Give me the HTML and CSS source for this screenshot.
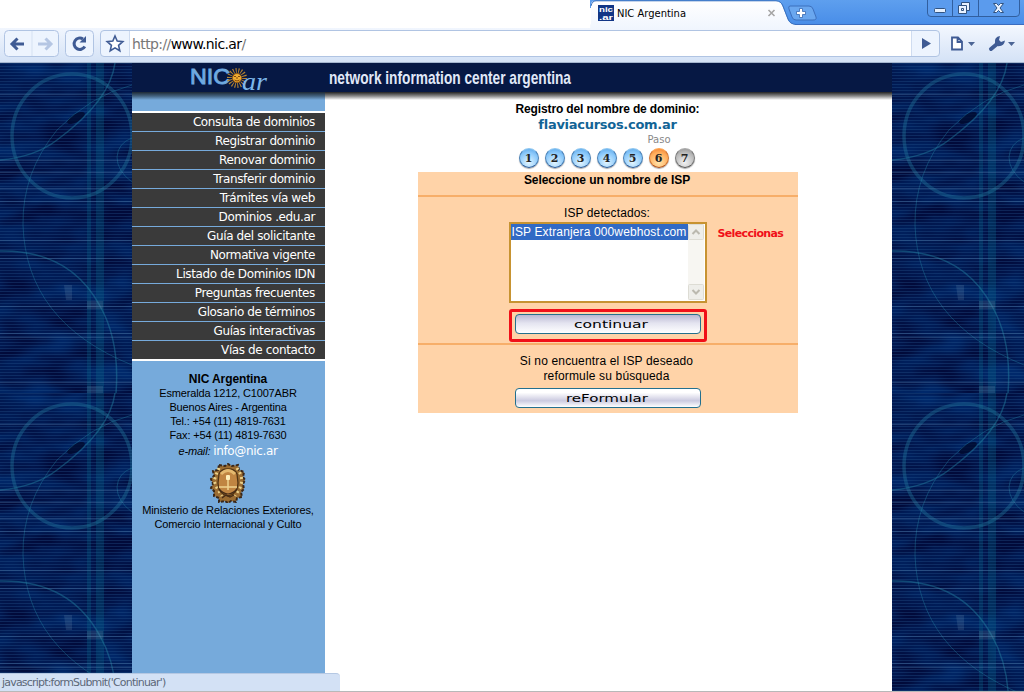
FILE: index.html
```html
<!DOCTYPE html>
<html lang="es">
<head>
<meta charset="utf-8">
<title>NIC Argentina</title>
<link rel="stylesheet" href="styles.css">
</head>
<body>
<header class="tabstrip">
  <div class="tab-space"></div>
  <svg class="tabs-art" width="434" height="28" viewBox="0 0 434 28">
    <defs>
      <linearGradient id="blue" x2="0" y2="1"><stop offset="0" stop-color="#5e9fee"/><stop offset="1" stop-color="#488de8"/></linearGradient>
      <linearGradient id="tab" x2="0" y2="1"><stop offset="0" stop-color="#ffffff"/><stop offset="1" stop-color="#f1f6fe"/></linearGradient>
    </defs>
    <path d="M0 0H434V25H205L0 8Z" fill="url(#blue)"/>
    <path d="M0 24.5H434V28H0Z" fill="#f4f8fe"/>
    <path d="M205 24.5H434" stroke="#3a6cc0"/>
    <path d="M1 28V5Q1 1 5 1H186Q190 1 192 5L198 20Q200 24 205 25V28Z" fill="url(#tab)"/>
    <path d="M1 6Q2 1 6 .8H186Q191 1 193 6L198 19Q200 24 206 24.5" fill="none" stroke="#3b71bd"/>
    <rect x="8" y="5" width="16" height="16" fill="#123686"/>
    <text x="9" y="12" class="fav" textLength="14" lengthAdjust="spacingAndGlyphs">nic</text>
    <text x="9" y="20" class="fav" textLength="14" lengthAdjust="spacingAndGlyphs">.ar</text>
    <text x="27" y="17" class="tab-title" textLength="69" lengthAdjust="spacingAndGlyphs">NIC Argentina</text>
    <path d="M178.500 10l6 6m0-6l-6 6" stroke="#a5a5a5" stroke-width="1.600"/>
    <path d="M200 6H219Q222 6 223 9L226 17Q227 20 223 20H206Q203 20 202 17L199 9Q198 6 200 6Z" fill="#6aa7ef" stroke="#3d70bd"/>
    <path d="M209.500 8.500h3v3h3v3h-3v3h-3v-3h-3v-3h3z" fill="#fff" stroke="#3668b0" stroke-width=".8"/>
    <path d="M337.500 0V13Q337.500 16.500 341 16.500H426Q429.500 16.500 429.500 13V0M362.500 0V16M388.500 0V16" fill="#5b9bed" stroke="#315f9f"/>
    <rect x="344.500" y="8.500" width="11" height="4" rx="1" fill="#e5f0ff" stroke="#315381"/>
    <g fill="#e9f2ff" stroke="#315381"><path d="M371.500 2.500h8v8h-8z"/><path d="M368.500 5.500h8v8h-8z"/><path d="M371.500 8.500h2v2h-2z"/></g>
    <path d="M403.500 3.500h3l2 2 2-2h3l-3.500 4.500 3.500 4.500h-3l-2-2-2 2h-3l3.500-4.500z" fill="#e9f2ff" stroke="#315381"/>
  </svg>
</header>
<div class="toolbar">
  <svg class="nav-buttons" width="55" height="27" viewBox="0 0 55 27">
    <rect x=".5" y=".5" width="54" height="26" rx="4" class="button-box"/><path d="M28 1V26" stroke="#d5e1f2"/>
    <path d="M20 14H9M13.500 8.500L8 14l5.500 5.500" class="arrow"/><path d="M34 14h12M41.500 8.500l5.500 5.500-5.500 5.500" class="arrow faded"/>
  </svg>
  <svg class="reload" width="29" height="27" viewBox="0 0 29 27">
    <rect x=".5" y=".5" width="28" height="26" rx="4" class="button-box"/>
    <path d="M19.800 16.500A5.700 5.700 0 1 1 18 9" class="arrow"/><path d="M14.500 12.500H21V6z" fill="#3f5b94"/>
  </svg>
  <div class="omnibox">
    <svg width="28" height="25" viewBox="0 0 28 25"><path d="M14 5l2.200 5.100 5.600.500-4.200 3.700 1.200 5.500-4.800-2.900-4.800 2.900 1.200-5.500-4.200-3.700 5.600-.500z" fill="#fff" stroke="#3f5b94" stroke-width="1.600"/></svg>
    <div class="url"><span class="muted">http://</span>www.nic.ar<span class="muted">/</span></div>
    <svg width="27" height="25" viewBox="0 0 27 25"><path d="M10 7v11l9-5.500z" fill="#3f5b94"/></svg>
  </div>
  <svg class="tools" width="74" height="27" viewBox="0 0 74 27">
    <path d="M3 7.500h6l4 4v8H3zM8.500 8v4H13" fill="#fff" stroke="#3f5b94" stroke-width="1.800"/>
    <path d="M19 12h7l-3.500 4zM59 12h7l-3.500 4z" fill="#4c6595"/>
    <path d="M42 19l6-5" stroke="#3f5b94" stroke-width="4" stroke-linecap="round"/>
    <path d="M46 13Q45 7 51 6L50 10l2 2 4-1.500Q55 17 48 16z" fill="#3f5b94"/>
  </svg>
</div>
<div class="viewport">
  <svg class="backdrop" width="132" height="628">
    <defs>
      <filter id="cloud" x="0" y="0" width="100%" height="100%" color-interpolation-filters="sRGB"><feTurbulence type="fractalNoise" baseFrequency=".022 .05" numOctaves="2" seed="8"/><feColorMatrix values="0 0 0 0 0  0 0 0 0 .16  0 0 0 0 .42  1.800 0 0 0 -.45"/></filter>
      <pattern id="scan" width="3" height="3" patternUnits="userSpaceOnUse"><path d="M0 .5H3" stroke="#25538c" stroke-opacity=".36"/></pattern>
      <symbol id="tile" viewBox="0 0 132 330">
        <rect width="132" height="330" fill="#010a3a"/>
        <rect width="132" height="330" filter="url(#cloud)"/>
        <rect width="132" height="330" fill="url(#scan)"/>
        <path d="M87 0h4v330h-4zM96 0h8v330h-8z" fill="#087091" opacity=".28"/>
        <ellipse cx="76" cy="55" rx="10" ry="4" fill="#000625" opacity=".7" transform="rotate(-30 76 55)"/>
        <g fill="none" stroke="#2482a2">
          <ellipse cx="72" cy="73" rx="60" ry="62" stroke-width="3.500" opacity=".35"/>
          <path d="M115 0Q110 38 57 77Q35 94 0 97M0 188Q70 187 100 243Q120 278 116 330" stroke-width="1.500" opacity=".45"/>
          <path d="M132 22Q90 33 57 67Q22 110 23 162Q26 259 132 302M132 75Q118 80 117 94Q117 108 132 119" opacity=".4"/>
        </g>
        <path d="M0 31.500H132M0 97.500H132M0 109.500H132M0 125.500H132M0 138.500H132M0 177.500H132M0 195.500H132M0 243.500H132M0 270.500H132M0 274.500H132M0 319.500H132" stroke="#608cba" opacity=".32"/>
        <path d="M64 222h8v15h-6zM87 238h16v8h-16zM87 323h16v7h-16z" fill="#7290b0" opacity=".2"/>
      </symbol>
    </defs>
    <use href="#tile" width="132" height="330"/><use href="#tile" y="330" width="132" height="330"/>
  </svg>
  <main class="page">
    <div class="banner">
      <svg width="760" height="29" viewBox="0 0 760 29">
        <text x="58" y="21" class="logo-nic" textLength="40" lengthAdjust="spacingAndGlyphs">NIC</text>
        <circle cx="105" cy="15" r="7.500" fill="none" stroke="#b78531" stroke-width="5" stroke-dasharray="1 1.600"/>
        <circle cx="105" cy="15" r="4.500" fill="#efad32" stroke="#9e5e10"/>
        <path d="M102 13.500h2m2 0h2M102.500 17q2.500 2 5 0M105 14v2" stroke="#81470d" fill="none"/>
        <text x="110" y="27" class="logo-ar" textLength="25" lengthAdjust="spacingAndGlyphs">ar</text>
        <text x="197" y="21" class="banner-title" textLength="242" lengthAdjust="spacingAndGlyphs">network information center argentina</text>
      </svg>
    </div>
    <div class="columns">
      <aside class="sidebar">
        <nav class="menu">
          <a>Consulta de dominios</a><a>Registrar dominio</a><a>Renovar dominio</a><a>Transferir dominio</a><a>Trámites vía web</a><a>Dominios .edu.ar</a><a>Guía del solicitante</a><a>Normativa vigente</a><a>Listado de Dominios IDN</a><a>Preguntas frecuentes</a><a>Glosario de términos</a><a>Guías interactivas</a><a>Vías de contacto</a>
        </nav>
        <address class="contact">
          <strong>NIC Argentina</strong>
          <span>Esmeralda 1212, C1007ABR</span><span>Buenos Aires - Argentina</span><span>Tel.: +54 (11) 4819-7631</span><span>Fax: +54 (11) 4819-7630</span>
          <span class="mail"><em>e-mail:</em> <a>info@nic.ar</a></span>
          <svg class="crest" width="38" height="40" viewBox="0 0 38 40">
            <path d="M10 2l6 1 3-2 4 2 6-1 1 5 5 2-1 5 2 3-2 4 1 5-3 3 1 5-5 1-1 4-5-1-3 2-3-2-6 1 0-4-5-2 0-5-3-3 2-4-2-5 3-3-1-5 5-1z" fill="#9a6c32" stroke="#392719" stroke-width="2" stroke-dasharray="3 1.500"/>
            <path d="M10 5l-3 7-2 6 3 7 5 8M28 5l4 7 1 6-2 7-5 8" fill="none" stroke="#ead18a" stroke-width="3" stroke-dasharray="2 3"/>
            <path d="M10 11Q12 6 19 6t9 5l1 9q0 11-10 13Q9 31 9 20z" fill="#c08542" stroke="#513414" stroke-width="1.300"/>
            <path d="M12 11q7-7 14 0" fill="none" stroke="#e4b96f" stroke-width="3"/>
            <path d="M10 24h18M19 15v12" stroke="#f0d390" stroke-width="1.500"/><rect x="17" y="12" width="4" height="5" rx="1" fill="#fff0bb"/>
            <path d="M10 26q9 10 18 0M13 35l4-3 4 2 4-2" fill="none" stroke="#452b16" stroke-width="1.200"/>
          </svg>
          <span class="ministry">Ministerio de Relaciones Exteriores,</span><span class="ministry">Comercio Internacional y Culto</span>
        </address>
      </aside>
      <section class="content">
        <h1>Registro del nombre de dominio:</h1>
        <div class="domain">flaviacursos.com.ar</div>
        <div class="step-label">Paso</div>
        <ol class="steps"><li>1</li><li>2</li><li>3</li><li>4</li><li>5</li><li class="current">6</li><li class="pending">7</li></ol>
        <div class="form">
          <h2>Seleccione un nombre de ISP</h2>
          <div class="detected">
            <div class="label">ISP detectados:</div>
            <div class="list-row">
              <div class="listbox"><div class="options"><div class="selected">ISP Extranjera 000webhost.com</div></div>
                <div class="scrollbar">
                  <svg width="16" height="16" viewBox="0 0 16 16"><rect x=".5" y=".5" width="15" height="15" rx="1" fill="#eeeeea" stroke="#dddcd4"/><path d="M4.500 10L8 6.500l3.500 3.500" class="chevron"/></svg>
                  <svg width="16" height="16" viewBox="0 0 16 16"><rect x=".5" y=".5" width="15" height="15" rx="1" fill="#eeeeea" stroke="#dddcd4"/><path d="M4.500 6L8 9.500 11.500 6" class="chevron"/></svg>
                </div>
              </div>
              <span class="note">Seleccionas</span>
            </div>
            <div class="highlight"><button><svg width="183" height="17"><text x="58" y="12" textLength="74" lengthAdjust="spacingAndGlyphs">continuar</text></svg></button></div>
          </div>
          <div class="retry"><p>Si no encuentra el ISP deseado<br>reformule su búsqueda</p><button><svg width="183" height="17"><text x="50" y="12" textLength="82" lengthAdjust="spacingAndGlyphs">reFormular</text></svg></button></div>
        </div>
      </section>
    </div>
  </main>
  <svg class="backdrop" width="132" height="628"><use href="#tile" width="132" height="330"/><use href="#tile" y="330" width="132" height="330"/></svg>
  <div class="status">javascript:formSubmit('Continuar')</div>
</div>
</body>
</html>
```
FILE: styles.css
```css
* { box-sizing: border-box; }
body { margin: 0; height: 692px; overflow: hidden; background: #fff; color: #000; font-family: "Liberation Sans", Arial, sans-serif; display: flex; flex-direction: column; }
svg { display: block; flex: none; }
.tabstrip { height: 28px; display: flex; flex: none; }
.tab-space { width: 590px; }
.tab-title { font: 11px "DejaVu Sans", sans-serif; }
.fav { font: bold 8px "Liberation Sans", sans-serif; fill: #fff; }
.toolbar { height: 35px; flex: none; display: flex; align-items: flex-start; padding: 2px 0 0 4px; background: linear-gradient(#f1f6fe, #d4e2f6); border-bottom: 1px solid #a5b6cf; }
.button-box { fill: #edf4fe; stroke: #b0c4e3; }
.arrow { fill: none; stroke: #3f5b94; stroke-width: 3; }
.faded { stroke: #b5c6e3; }
.reload { margin-left: 6px; }
.omnibox { width: 840px; height: 27px; margin-left: 6px; border: 1px solid #b0c4e3; border-radius: 4px; background: #edf4fe; display: flex; }
.url { flex: 1; background: #fff; border: solid #cfdcf0; border-width: 0 1px; padding: 1px 0 0 2px; font: 14px/25px "DejaVu Sans", sans-serif; letter-spacing: -.6px; }
.muted { color: #777; }
.tools { margin-left: 9px; }
.viewport { position: relative; height: 629px; flex: none; display: flex; border-bottom: 1px solid #b8b8b8; }
.backdrop { overflow: hidden; }
.page { width: 760px; display: flex; flex-direction: column; }
.banner { height: 29px; background: #061844; flex: none; }
.banner svg { overflow: visible; }
.logo-nic { font: 22px "Liberation Sans", sans-serif; fill: #6faae0; stroke: #6faae0; stroke-width: .9; }
.logo-ar { font: italic 25px "Liberation Serif", serif; fill: #7db7ea; }
.banner-title { font: bold 19px "Liberation Sans Narrow", "Liberation Sans", sans-serif; fill: #e0e8f8; }
.columns { flex: 1; display: flex; background: linear-gradient(#222, #888 4px, #fff 8px); }
.sidebar { width: 193px; background: linear-gradient(#1d2935, #42617e 4px, #76aadb 8px); padding-top: 19px; }
.menu { display: flex; flex-direction: column; gap: 1px; background: #76aadb; border: solid #fff; border-width: 2px 0; }
.menu a { height: 18px; background: #3a3a3a; color: #fff; text-align: right; padding-right: 10px; font: 12px/18px "DejaVu Sans", sans-serif; letter-spacing: -.38px; white-space: nowrap; }
.contact { display: flex; flex-direction: column; align-items: center; padding: 11px 1px 0 0; font: normal 11px/14px "Liberation Sans", sans-serif; letter-spacing: -.16px; white-space: nowrap; }
.contact strong { font-size: 12px; letter-spacing: -.1px; }
.mail { line-height: 18px; }
.mail a { color: #fff; font: 12px "DejaVu Sans", sans-serif; letter-spacing: -.35px; }
.crest { margin: 3px 0 0; }
.ministry { letter-spacing: -.11px; }
.content { flex: 1; display: flex; flex-direction: column; align-items: center; padding: 10px 2px 0 0; text-align: center; }
h1, h2, p { margin: 0; font-size: 12px; line-height: 15px; }
h1 { letter-spacing: -.13px; }
.domain { font: bold 13px/16px "DejaVu Sans", sans-serif; color: #126496; letter-spacing: -.28px; }
.step-label { font: 10px/13px "DejaVu Sans", sans-serif; color: #888; padding-left: 103px; }
.steps { margin: 2px 2px 4px 0; padding: 0; display: flex; gap: 6px; list-style: none; }
.steps li { width: 20px; height: 20px; border-radius: 50%; border: 1px solid #3979b9; border-color: #8dc6f0 #487fb4 #285a99; background: radial-gradient(circle at 48% 75%, #e2f5ff, #8ac8fa 60%, #4e9ee4); box-shadow: 0 1px 1px #aaa; font: bold 11px/19px "DejaVu Serif", serif; color: #222; }
.steps .current { border-color: #ffa552 #cd7332 #ae4e17; background: radial-gradient(circle at 48% 75%, #ffe5ad, #ffad5b 60%, #ed7425); }
.steps .pending { border-color: #aaa #777 #555; background: radial-gradient(circle at 48% 75%, #f2f2f2, #bbb 60%, #878787); }
.form { width: 380px; height: 241px; background: #ffd3a8; display: flex; flex-direction: column; }
h2 { height: 25px; line-height: 16px; border-bottom: 2px solid #f7ae69; padding-right: 1px; letter-spacing: -.07px; }
.detected { height: 148px; border-bottom: 2px solid #f7ae69; padding-top: 8px; }
.label { height: 17px; font-size: 12px; line-height: 16px; padding-right: 1px; letter-spacing: .1px; }
.list-row { display: flex; height: 81px; padding-left: 91px; }
.listbox { width: 198px; height: 81px; border: 2px solid #c79332; background: #fff; display: flex; padding: 0 1px 1px 0; }
.options { width: 179px; }
.selected { height: 16px; background: #316ac5; color: #fff; font-size: 12px; line-height: 16px; text-align: left; padding-left: 1px; white-space: nowrap; letter-spacing: .13px; }
.scrollbar { flex: 1; background: #f7f6f2; display: flex; flex-direction: column; justify-content: space-between; }
.chevron { fill: none; stroke: #bbb9af; stroke-width: 2; }
.note { color: #f01018; font: bold 11px/20px "DejaVu Sans", sans-serif; margin-left: 11px; padding-top: 2px; letter-spacing: -.65px; }
.highlight { width: 198px; height: 33px; margin: 6px 0 0 91px; border: 3px solid #f01018; border-radius: 3px; padding: 2px 3px; }
button { display: block; width: 186px; height: 20px; padding: 0; border: 1px solid #24708e; border-radius: 4px; background: linear-gradient(#fff, #fff 20%, #cbcae0 65%, #fff); }
.highlight button { background: linear-gradient(#b9b8d2, #e4e4f0 45%, #fff); }
button text { font: 10px "DejaVu Sans", sans-serif; fill: #000; }
.retry { padding-top: 9px; }
.retry p { padding-right: 2px; letter-spacing: .16px; }
.retry button { margin: 4px 0 0 97px; }
.status { position: absolute; left: 0; bottom: 0; width: 340px; height: 18px; background: #d3e1f5; border-top: 1px solid #b5c8e3; border-radius: 0 4px 0 0; padding-left: 2px; color: #5c6878; font: 11px/17px "DejaVu Sans", sans-serif; letter-spacing: -.8px; }
```
